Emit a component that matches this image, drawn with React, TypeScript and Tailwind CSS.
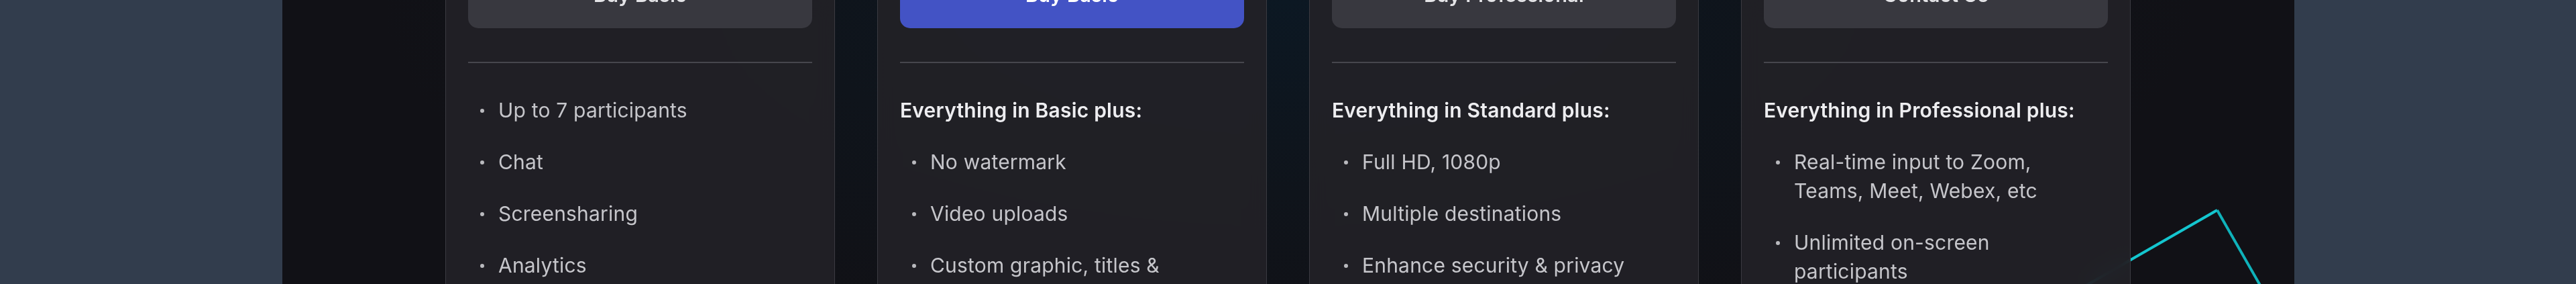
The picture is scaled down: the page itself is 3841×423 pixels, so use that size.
import React from "react";

type Plan = {
  button: string;
  primary?: boolean;
  heading?: string;
  items: React.ReactNode[];
};

const plans: Plan[] = [
  {
    button: "Buy Basic",
    items: ["Up to 7 participants", "Chat", "Screensharing", "Analytics"],
  },
  {
    button: "Buy Basic",
    primary: true,
    heading: "Everything in Basic plus:",
    items: ["No watermark", "Video uploads", "Custom graphic, titles & overlays"],
  },
  {
    button: "Buy Professional",
    heading: "Everything in Standard plus:",
    items: ["Full HD, 1080p", "Multiple destinations", "Enhance security & privacy"],
  },
  {
    button: "Contact Us",
    heading: "Everything in Professional plus:",
    items: [
      <>
        Real-time input to Zoom,
        <br />
        Teams, Meet, Webex, etc
      </>,
      <>
        Unlimited on-screen
        <br />
        participants
      </>,
    ],
  },
];

function Card({ plan }: { plan: Plan }) {
  return (
    <div className="w-[581px] shrink-0 border border-[#3a3a41] bg-[#222127]/90 backdrop-blur-[14px] px-[33px] pb-[60px]">
      <div
        className={
          "flex h-[100px] items-center justify-center rounded-b-[15px] text-[29px] font-semibold leading-[43px] tracking-[0.2px] " +
          (plan.primary ? "bg-[#4353c5] text-white" : "bg-[#38383f] text-[#e4e4e7]")
        }
      >
        {plan.button}
      </div>
      <div className="mt-[50px] h-[2px] bg-[#46464d]" />
      <div className="mt-[49px] flex flex-col gap-[34px] text-[30px] leading-[43px] tracking-[0.2px]">
        {plan.heading && (
          <div className="font-semibold text-[#ededf0]">{plan.heading}</div>
        )}
        {plan.items.map((it, i) => (
          <div key={i} className="flex items-start text-[#c6c6cb]">
            <span className="ml-[18px] mt-[19px] h-[6px] w-[6px] shrink-0 rounded-full bg-[#b9b9be]" />
            <span className="ml-[21px]">{it}</span>
          </div>
        ))}
      </div>
    </div>
  );
}

export default function App() {
  return (
    <div
      className="flex h-[423px] w-full justify-center overflow-hidden bg-[#323d4d]"
      style={{ fontFamily: "Inter, 'Open Sans', sans-serif" }}
    >
      <div className="relative h-full w-[3000px] shrink-0 overflow-hidden bg-[#111116] bg-[radial-gradient(ellipse_1350px_520px_at_50%_0%,#0c1823_0%,#0f141b_55%,#111116_100%)]">
        <svg
          className="absolute left-0 top-0"
          width="3000"
          height="423"
          viewBox="0 0 3000 423"
        >
          <polyline
            points="2559,500 2885,313"
            fill="none"
            stroke="#14c6cf"
            strokeWidth="4"
          />
          <polyline
            points="2885,313 2992,500"
            fill="none"
            stroke="#0fb2ba"
            strokeWidth="4"
          />
        </svg>
        <div className="relative -mt-[59px] flex justify-center gap-[63px]">
          {plans.map((p, i) => (
            <Card key={i} plan={p} />
          ))}
        </div>
      </div>
    </div>
  );
}
